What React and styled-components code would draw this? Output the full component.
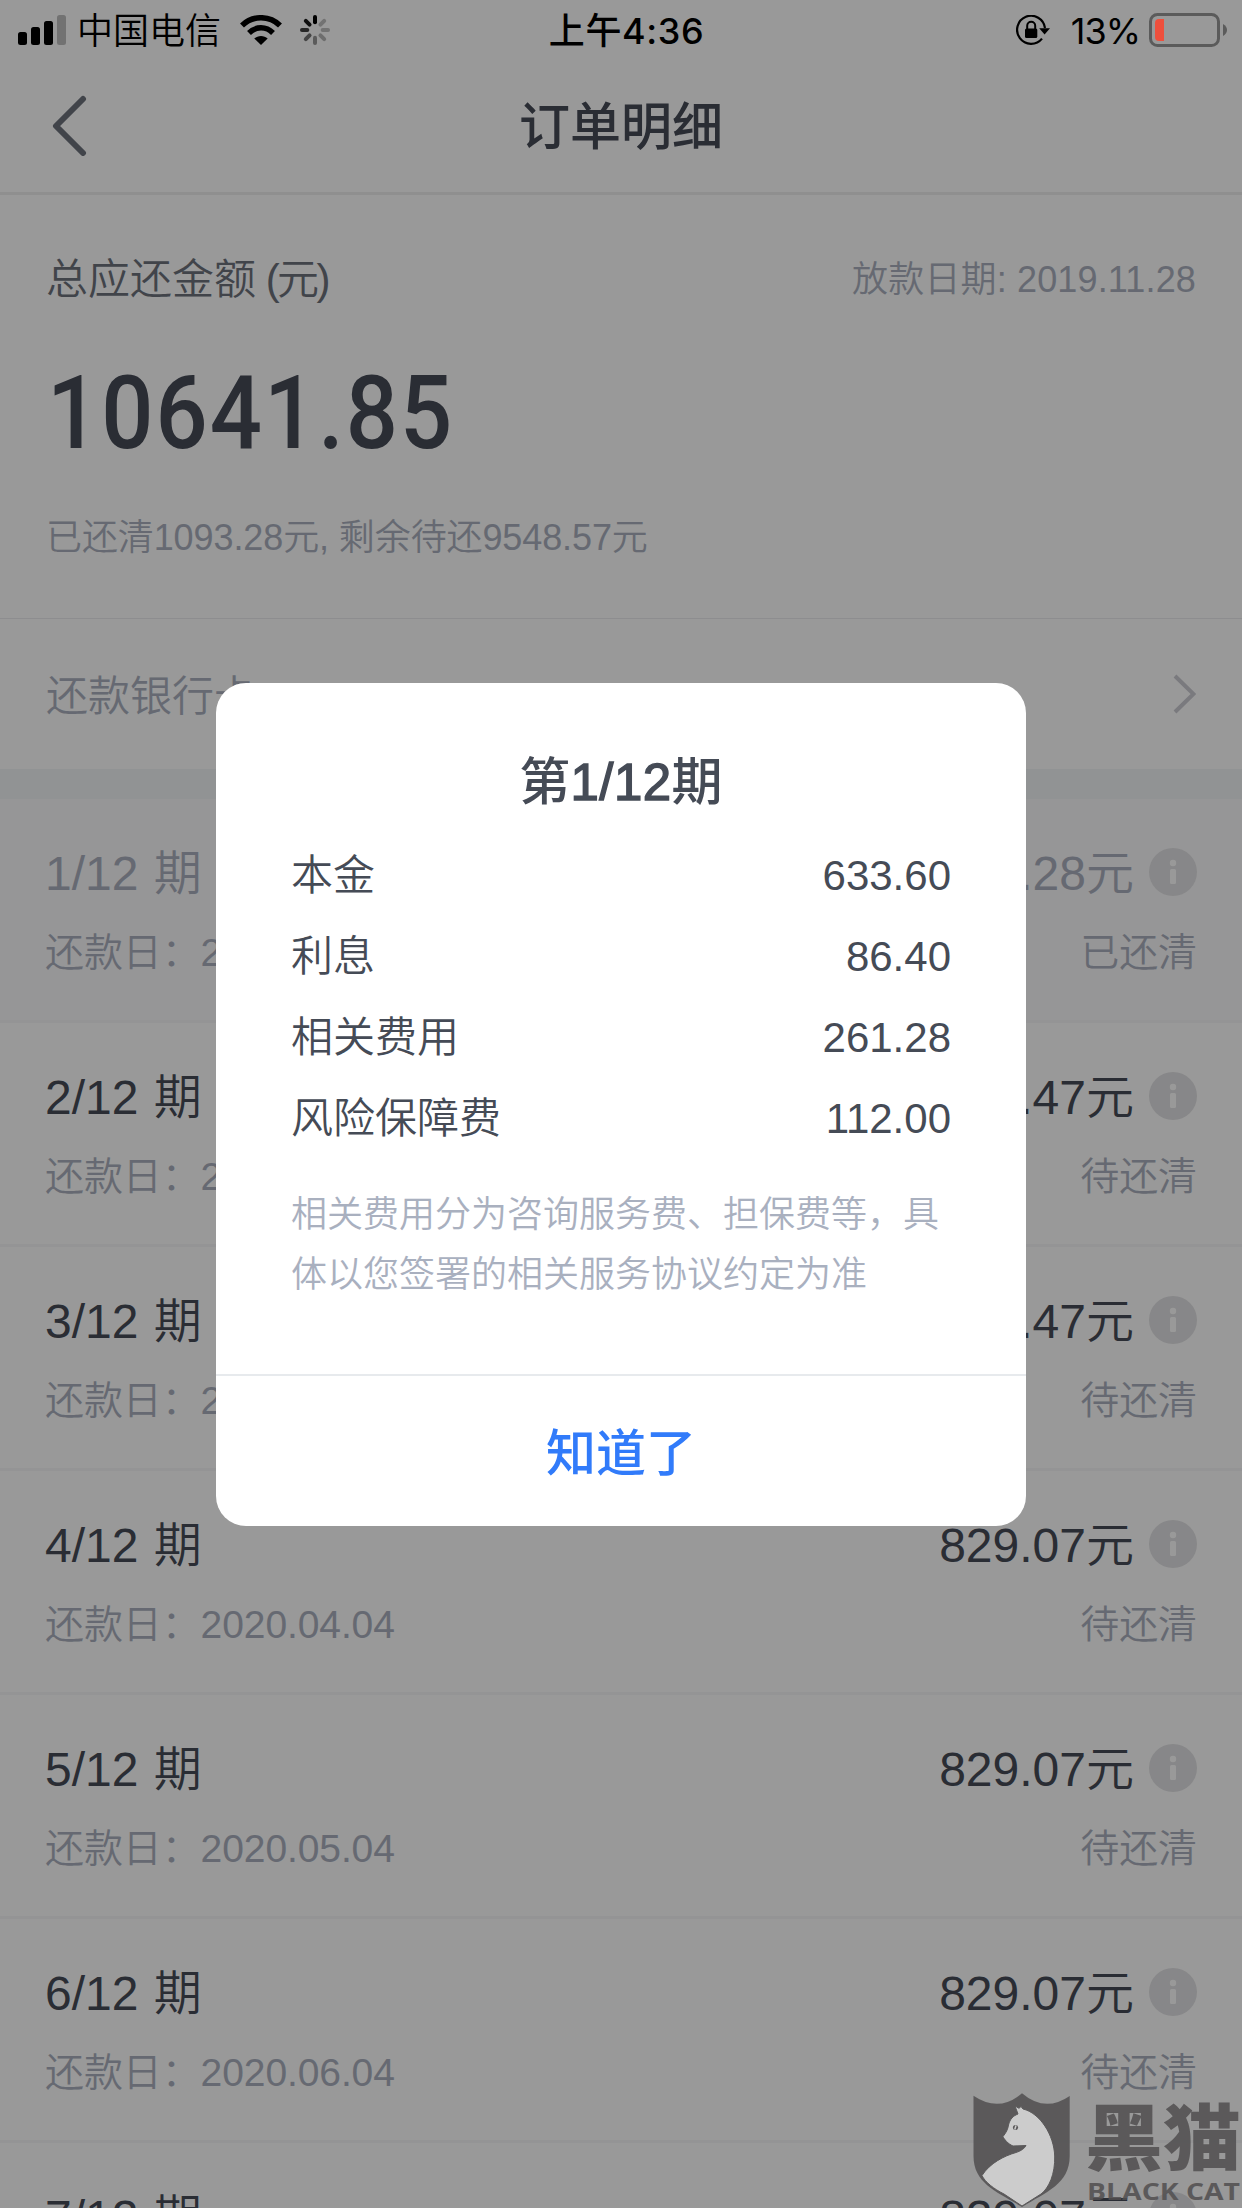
import styled, { createGlobalStyle } from "styled-components";

const GlobalStyle = createGlobalStyle`
    * {
        box-sizing: border-box;
    }

    body {
        margin: 0;
        background-color: #fff;
        font-family: "Liberation Sans", "Noto Sans CJK SC", sans-serif;
        font-weight: 350;
    }
`

const Page = styled.div`
    position: relative;
    width: 1242px;
    height: 2208px;
    overflow: hidden;
    background-color: #fff;
`

const StatusBar = styled.div`
    position: relative;
    z-index: 3;
    display: grid;
    grid-template-columns: 1fr auto 1fr;
    align-items: center;
    height: 60px;
    padding: 0 13px 0 18px;
    color: #000;
    font-family: Inter, "Noto Sans CJK SC", sans-serif;
    font-size: 36px;
    line-height: 63px;

    svg {
        display: block;
        flex: none;
    }
`

const StatusLeft = styled.div`
    display: flex;
    align-items: center;
`

const Carrier = styled.span`
    height: 60px;
    margin: 0 19px 0 11px;
`

const Time = styled.div`
    height: 60px;
    padding-left: 6px;
    font-weight: 500;
    letter-spacing: .6px;
`

const StatusRight = styled.div`
    display: flex;
    align-items: center;
    justify-content: flex-end;
`

const Percent = styled.span`
    height: 60px;
    margin: 0 9px 0 21px;
    font-weight: 400;
    letter-spacing: -1px;
`

const NavBar = styled.header`
    display: grid;
    grid-template-columns: 1fr auto 1fr;
    align-items: center;
    height: 135px;
    padding: 0 50px 3px;
    border-bottom: 3px solid #efefef;
`

const NavTitle = styled.h1`
    margin: 0;
    padding-top: 7px;
    color: #464b57;
    font-size: 51px;
    font-weight: 500;
    line-height: 60px;
`

const Summary = styled.section`
    height: 424px;
    padding: 57px 46px 0;
    border-bottom: 1px solid #ebecee;
`

const SummaryTop = styled.div`
    display: flex;
    align-items: center;
    justify-content: space-between;
    height: 56px;
`

const SummaryLabel = styled.div`
    color: #6d727c;
    font-size: 42px;
    line-height: 56px;
    white-space: pre;
`

const Unit = styled.span`
    margin-left: -2px;
    letter-spacing: -2.6px;
`

const LoanDate = styled.div`
    color: #aab0be;
    font-size: 36px;
    line-height: 56px;
    letter-spacing: .15px;
`

const Total = styled.div`
    width: 500px;
    margin: 55px 0 0 1px;
    color: #464b57;
    font-family: Roboto, sans-serif;
    font-size: 102px;
    font-weight: 500;
    line-height: 100px;
    letter-spacing: 2.3px;
    transform: scaleX(.9);
    transform-origin: left;
`

const Progress = styled.div`
    margin-top: 50px;
    color: #aab0be;
    font-size: 36px;
    line-height: 50px;
    letter-spacing: -.1px;
`

const BankRow = styled.div`
    display: flex;
    align-items: center;
    justify-content: space-between;
    height: 150px;
    padding: 0 46px;
    color: #aab0be;
    font-size: 42px;
    line-height: 60px;

    span {
        padding-top: 5px;
    }
`

const Gap = styled.div`
    height: 30px;
    background-color: #f2f5f7;
`

const Term = styled.div`
    height: 224px;
    padding: 43px 46px 0 45px;
    background-color: ${props => props.$paid ? "#fafafc" : "#fff"};
    border-bottom: 3px solid #f7f7f8;
`

const TermLine = styled.div`
    display: flex;
    align-items: center;
    justify-content: space-between;
    height: 60px;
    color: ${props => props.$paid ? "#aab0be" : "#464b57"};
    font-size: 48px;
    line-height: 60px;
    word-spacing: 2px;

    span {
        padding-top: 3px;
    }
`

const Amount = styled.div`
    display: flex;
    align-items: center;
    gap: 15px;
    margin-right: -1px;
`

const TermInfo = styled.div`
    display: flex;
    justify-content: space-between;
    margin: 26px -1px 0 0;
    color: #aab0be;
    font-size: 39px;
    line-height: 50px;
    letter-spacing: -.1px;
`

const Overlay = styled.div`
    position: absolute;
    inset: 0;
    z-index: 2;
    display: flex;
    align-items: flex-start;
    justify-content: center;
    padding-top: 683px;
    background-color: rgba(0, 0, 0, .4);
`

const Dialog = styled.div`
    width: 810px;
    height: 843px;
    border-radius: 30px;
    background-color: #fff;
    color: #454b56;
    overflow: hidden;
`

const DialogBody = styled.div`
    height: 691px;
    padding: 70px 75px 0;
`

const DialogTitle = styled.h2`
    margin: 0 0 22px;
    font-size: 51px;
    font-weight: 500;
    line-height: 60px;
    letter-spacing: .4px;
    text-align: center;
`

const TitleNumber = styled.span`
    -webkit-text-stroke: 1.4px #454b56;
`

const Fee = styled.div`
    display: flex;
    justify-content: space-between;
    font-size: 42px;
    line-height: 81px;
    height: 81px;
`

const Note = styled.p`
    margin: 26px 0 0;
    color: #a9b0bf;
    font-size: 36px;
    line-height: 60px;
`

const Confirm = styled.button`
    display: block;
    width: 100%;
    height: 152px;
    padding: 7px 0 0;
    border: 0;
    border-top: 2px solid #e7eaed;
    background: none;
    color: #317bfa;
    font-family: inherit;
    font-size: 50px;
    font-weight: 500;
    line-height: 143px;
`

const Watermark = styled.svg`
    position: absolute;
    left: 962px;
    top: 2080px;
    z-index: 4;
    opacity: .85;
`

const SpinnerIcon = styled.svg`
    margin-left: 18px;
`

const terms = [
    { no: 1, date: "2020.01.04", amount: "1093.28", paid: true },
    { no: 2, date: "2020.02.04", amount: "829.47" },
    { no: 3, date: "2020.03.04", amount: "829.47" },
    { no: 4, date: "2020.04.04", amount: "829.07" },
    { no: 5, date: "2020.05.04", amount: "829.07" },
    { no: 6, date: "2020.06.04", amount: "829.07" },
    { no: 7, date: "2020.07.04", amount: "829.07" },
]

const fees = [
    ["本金", "633.60"],
    ["利息", "86.40"],
    ["相关费用", "261.28"],
    ["风险保障费", "112.00"],
]

const spokes = [1, .25, .25, .28, .4, .55, .75, .9]

function Signal() {
    return (
        <svg width="48" height="30" viewBox="0 0 48 30">
            <rect x="0" y="17" width="9" height="13" rx="2.5" />
            <rect x="13" y="12" width="9" height="18" rx="2.5" />
            <rect x="26" y="6" width="9" height="24" rx="2.5" />
            <rect x="39" y="0" width="9" height="30" rx="2.5" opacity=".25" />
        </svg>
    )
}

function Wifi() {
    return (
        <svg width="42" height="30" viewBox="0 0 42 30">
            <path d="M2 10.5C12.5 .2 29.5 .2 40 10.5" fill="none" stroke="#000" strokeWidth="5.6" />
            <path d="M9 18C15.800 11 26.200 11 33 18" fill="none" stroke="#000" strokeWidth="5.4" />
            <path d="M14.300 23.500C18 20 24 20 27.700 23.500L21 30Z" />
        </svg>
    )
}

function Spinner() {
    return (
        <SpinnerIcon width="30" height="30" viewBox="0 0 30 30">
            {spokes.map((opacity, i) => (
                <line
                    key={i}
                    x1="15" y1="2" x2="15" y2="7.300"
                    stroke="#000" strokeWidth="4" strokeLinecap="round"
                    opacity={opacity}
                    transform={`rotate(${i * 45} 15 15)`}
                />
            ))}
        </SpinnerIcon>
    )
}

function RotationLock() {
    return (
        <svg width="34" height="30" viewBox="0 0 34 30">
            <path d="M29 13A14 14 0 1 0 26 23.600" fill="none" stroke="#000" strokeWidth="2.200" />
            <path d="M23.200 13.300H34L28.600 19.500Z" />
            <rect x="9" y="13.500" width="12.300" height="9.500" rx="1.500" />
            <path d="M11.200 14V10.800A4 4 0 0 1 19.200 10.800V14" fill="none" stroke="#000" strokeWidth="2" />
        </svg>
    )
}

function Battery() {
    return (
        <svg width="80" height="34" viewBox="0 0 80 34">
            <rect x="1.500" y="1.500" width="68" height="31" rx="7" fill="none" stroke="#5b5b5b" strokeWidth="3" />
            <path d="M15 6H10Q6 6 6 10V24Q6 28 10 28H15Z" fill="#ee4f3c" />
            <path d="M74 11Q78 13.500 78 17T74 23Z" fill="#5b5b5b" />
        </svg>
    )
}

function InfoIcon() {
    return (
        <svg width="48" height="48" viewBox="0 0 48 48">
            <circle cx="24" cy="24" r="24" fill="#e2e2e4" />
            <circle cx="24" cy="15" r="3.200" fill="#fff" />
            <rect x="21" y="21" width="6" height="15" rx="1.500" fill="#fff" />
        </svg>
    )
}

function BlackCat() {
    return (
        <Watermark width="280" height="128" viewBox="0 0 280 128">
            <path
                d="M11.500 15.700Q37 33 60 13.300Q83 33 107.700 16V76C107.700 104 84 112 60 127C36 112 11.500 104 11.500 76Z"
                fill="#514f50"
            />
            <path
                d="M53 26L57 28.300L59 26.500L61 29C78 33 92 55 92.700 76C93.200 94 87 108 79 114L60 126L42 114C32 109 23 102 20 95.500C28 83 42 76 54 72.500C59 71 63 68 64 65.500L51 66C46 64 42 59 41 56.500C44 53 46 49 46.500 45C48 39 51 36 56 34Z"
                fill="#d6d6d6"
                stroke="#514f50"
                strokeWidth="1"
            />
            <ellipse cx="53.500" cy="47.500" rx="2.600" ry="2.500" fill="#514f50" />
            <path d="M54 45.500L52.800 49.500" stroke="#d6d6d6" strokeWidth="1.500" />
            <g fill="#514f50">
                <text
                    x="123" y="84" fontSize="72" fontWeight="900"
                    fontFamily='"Noto Sans CJK SC", sans-serif'
                    textLength="156" lengthAdjust="spacingAndGlyphs"
                >
                    黑猫
                </text>
                <text
                    x="125" y="120" fontSize="23" fontWeight="700"
                    fontFamily='"Open Sans", sans-serif'
                    textLength="153" lengthAdjust="spacingAndGlyphs"
                >
                    BLACK CAT
                </text>
            </g>
        </Watermark>
    )
}

function TermRow(props) {
    return (
        <Term $paid={props.paid}>
            <TermLine $paid={props.paid}>
                <span>{props.no}/12 期</span>
                <Amount>
                    <span>{props.amount}元</span>
                    <InfoIcon />
                </Amount>
            </TermLine>
            <TermInfo>
                <span>还款日：{props.date}</span>
                <span>{props.paid ? "已还清" : "待还清"}</span>
            </TermInfo>
        </Term>
    )
}

function App() {
    return (
        <Page>
            <GlobalStyle />
            <StatusBar>
                <StatusLeft>
                    <Signal />
                    <Carrier>中国电信</Carrier>
                    <Wifi />
                    <Spinner />
                </StatusLeft>
                <Time>上午4:36</Time>
                <StatusRight>
                    <RotationLock />
                    <Percent>13%</Percent>
                    <Battery />
                </StatusRight>
            </StatusBar>
            <NavBar>
                <svg width="38" height="62" viewBox="0 0 38 62">
                    <path d="M33 5L6 32L33 59" fill="none" stroke="#6d727c" strokeWidth="6" strokeLinecap="round" strokeLinejoin="round" />
                </svg>
                <NavTitle>订单明细</NavTitle>
            </NavBar>
            <Summary>
                <SummaryTop>
                    <SummaryLabel>总应还金额 <Unit>(元)</Unit></SummaryLabel>
                    <LoanDate>放款日期: 2019.11.28</LoanDate>
                </SummaryTop>
                <Total>10641.85</Total>
                <Progress>已还清1093.28元, 剩余待还9548.57元</Progress>
            </Summary>
            <BankRow>
                <span>还款银行卡</span>
                <svg width="24" height="40" viewBox="0 0 24 40">
                    <path d="M3 2L21.500 20L3 38" fill="none" stroke="#cbcbd2" strokeWidth="4" />
                </svg>
            </BankRow>
            <Gap />
            {terms.map(term => <TermRow key={term.no} {...term} />)}
            <Overlay>
                <Dialog>
                    <DialogBody>
                        <DialogTitle>第<TitleNumber>1/12</TitleNumber>期</DialogTitle>
                        {fees.map(([name, value]) => (
                            <Fee key={name}>
                                <span>{name}</span>
                                <span>{value}</span>
                            </Fee>
                        ))}
                        <Note>相关费用分为咨询服务费、担保费等，具体以您签署的相关服务协议约定为准</Note>
                    </DialogBody>
                    <Confirm>知道了</Confirm>
                </Dialog>
            </Overlay>
            <BlackCat />
        </Page>
    )
}

export default App
